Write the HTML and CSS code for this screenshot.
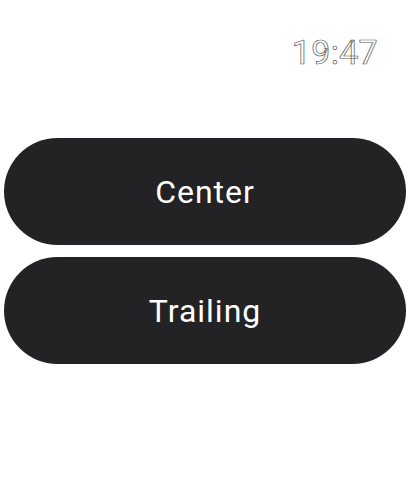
FILE: index.html
```html
<!DOCTYPE html>
<html>
<head>
<meta charset="utf-8">
<link rel="stylesheet" href="styles.css">
</head>
<body>
<div class="screen">
  <div class="statusbar"><span class="time">19:47</span></div>
  <div class="list">
    <button class="pill">Center</button>
    <button class="pill">Trailing</button>
  </div>
</div>
</body>
</html>
```
FILE: styles.css
```css
html, body {
  margin: 0;
  padding: 0;
  background: #ffffff;
}
.screen {
  width: 410px;
  height: 502px;
  display: flex;
  flex-direction: column;
  font-family: Roboto, "Noto Sans", sans-serif;
}
.statusbar {
  display: flex;
  justify-content: flex-end;
  padding: 30px 32px 0 0;
  height: 44px;
}
.time {
  font-size: 34px;
  line-height: 44px;
  color: #ffffff;
  -webkit-text-stroke: 0.7px #555555;
  letter-spacing: 0.3px;
}
.list {
  display: flex;
  flex-direction: column;
  gap: 12px;
  padding: 64px 4px 0 4px;
}
.pill {
  height: 107px;
  border: none;
  border-radius: 54px;
  background: #232325;
  color: #ffffff;
  font-family: Roboto, "Noto Sans", sans-serif;
  font-size: 32px;
  letter-spacing: 1px;
  padding: 0;
  margin: 0;
}
```
